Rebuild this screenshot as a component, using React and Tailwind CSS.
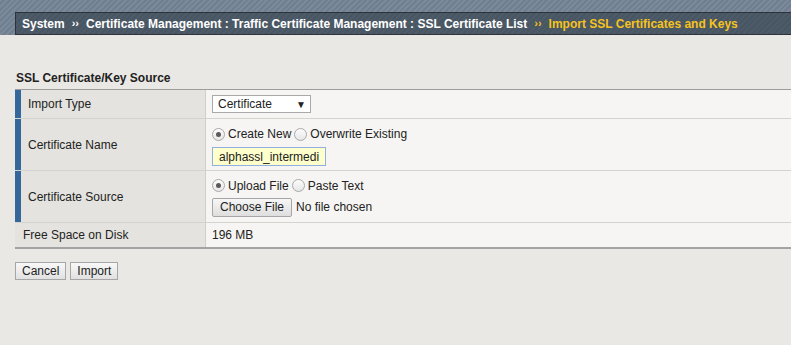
import React from "react";

function Radio({ checked }) {
  return (
    <span className="inline-flex w-[13px] h-[13px] rounded-full border border-[#a9a9a9] bg-[linear-gradient(#fdfdfd,#e6e6e6)] items-center justify-center align-middle">
      {checked && <span className="w-[5px] h-[5px] rounded-full bg-[#5a5a5a]" />}
    </span>
  );
}

function Row({ label, bar = true, children, h }) {
  return (
    <div className={`flex border-b border-[#d4d3cf] ${h}`}>
      <div className={`w-[191px] shrink-0 flex items-center bg-[#e4e3df] border-r border-[#d0cfcb] ${bar ? "border-l-[6px] border-l-[#36679a] pl-[7px]" : "pl-[8px]"}`}>
        {label}
      </div>
      <div className="flex-1 bg-[#f6f5f3] pl-[6px] flex flex-col justify-center">{children}</div>
    </div>
  );
}

export default function App() {
  return (
    <div className="w-[791px] h-[345px] bg-[#eae8e4] text-[12px] text-[#222] font-['Liberation_Sans',Arial,sans-serif] overflow-hidden">
      <div className="h-[35px] pt-[12px] pl-[15px] bg-[#728293] bg-[repeating-linear-gradient(135deg,#7a8a9b_0px,#7a8a9b_2px,#6f7f90_2px,#6f7f90_4px)]">
        <div className="h-[23px] bg-[#4b5866] border-t border-l border-b border-[#2d3339] flex items-center pl-[6px] font-bold text-white bg-[repeating-linear-gradient(135deg,#4d5a68_0px,#4d5a68_2px,#485562_2px,#485562_4px)]">
          <span>System</span>
          <span className="mx-[7px] text-[11px]">››</span>
          <span>Certificate Management : Traffic Certificate Management : SSL Certificate List</span>
          <span className="mx-[7px] text-[11px] text-[#f5c31e]">››</span>
          <span className="text-[#f5c31e]">Import SSL Certificates and Keys</span>
        </div>
      </div>

      <div className="pt-[36px] pl-[16px] font-bold leading-[14px] h-[54px]">SSL Certificate/Key Source</div>

      <div className="ml-[15px] border-t border-[#9c9c9c] border-b-2 border-b-[#a3a3a3]">
        <Row label="Import Type" h="h-[29px]">
          <div className="w-[99px] h-[18px] border border-[#a9a9a9] bg-white flex items-center justify-between pl-[5px] pr-[4px]">
            <span>Certificate</span>
            <span className="text-[10px]">▼</span>
          </div>
        </Row>
        <Row label="Certificate Name" h="h-[52px]">
          <div className="flex items-center gap-[3px] mt-[2px]">
            <Radio checked />
            <span>Create New</span>
            <Radio />
            <span>Overwrite Existing</span>
          </div>
          <div className="mt-[4px] w-[114px] h-[19px] border border-[#8fb0e0] bg-[#ffffcc] pl-[6px] flex items-center">alphassl_intermedi</div>
        </Row>
        <Row label="Certificate Source" h="h-[52px]">
          <div className="flex items-center gap-[3px]">
            <Radio checked />
            <span>Upload File</span>
            <Radio />
            <span>Paste Text</span>
          </div>
          <div className="mt-[3px] flex items-center">
            <div className="h-[19px] px-[7px] border border-[#a6a6a6] rounded-[2px] bg-[linear-gradient(#f6f6f6,#dedede)] flex items-center">Choose File</div>
            <span className="ml-[4px]">No file chosen</span>
          </div>
        </Row>
        <Row label="Free Space on Disk" bar={false} h="h-[24px] border-b-0">
          <span>196 MB</span>
        </Row>
      </div>

      <div className="flex gap-[4px] ml-[15px] mt-[13px]">
        <div className="h-[18px] px-[6px] border border-[#a6a6a6] bg-[linear-gradient(#f8f8f8,#e1e1e1)] flex items-center">Cancel</div>
        <div className="h-[18px] px-[6px] border border-[#a6a6a6] bg-[linear-gradient(#f8f8f8,#e1e1e1)] flex items-center">Import</div>
      </div>
    </div>
  );
}
